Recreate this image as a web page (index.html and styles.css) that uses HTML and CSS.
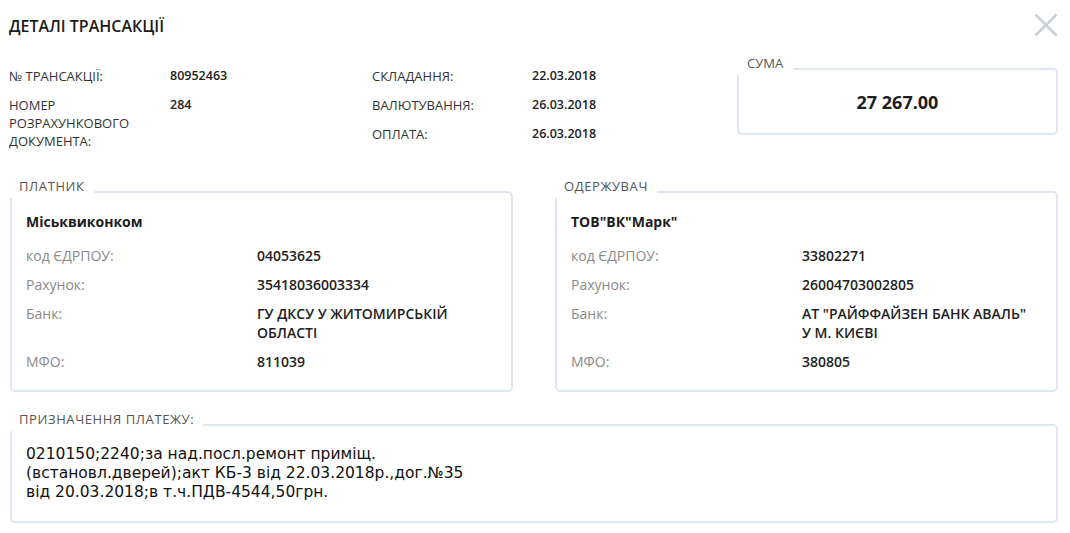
FILE: index.html
```html
<!DOCTYPE html>
<html lang="uk">
<head>
<meta charset="utf-8">
<title>Деталі трансакції</title>
<link rel="stylesheet" href="styles.css">
</head>
<body>
<div class="modal">
  <div class="header">
    <h1 class="title">ДЕТАЛІ ТРАНСАКЦІЇ</h1>
    <button class="close" aria-label="Закрити">
      <svg width="24" height="24" viewBox="0 0 24 24"><path d="M1.5 1.5 L22.5 22.5 M22.5 1.5 L1.5 22.5" stroke="#cbd0d8" stroke-width="2.6" fill="none"/></svg>
    </button>
  </div>

  <div class="info">
    <div class="col">
      <div class="row"><span class="lbl">№ ТРАНСАКЦІЇ:</span><span class="val">80952463</span></div>
      <div class="row"><span class="lbl">НОМЕР РОЗРАХУНКОВОГО ДОКУМЕНТА:</span><span class="val">284</span></div>
    </div>
    <div class="col">
      <div class="row"><span class="lbl">СКЛАДАННЯ:</span><span class="val">22.03.2018</span></div>
      <div class="row"><span class="lbl">ВАЛЮТУВАННЯ:</span><span class="val">26.03.2018</span></div>
      <div class="row"><span class="lbl">ОПЛАТА:</span><span class="val">26.03.2018</span></div>
    </div>
    <div class="box sum">
      <span class="legend">СУМА</span>
      <div class="amount">27 267.00</div>
    </div>
  </div>

  <div class="parties">
    <div class="box party">
      <span class="legend">ПЛАТНИК</span>
      <div class="name">Міськвиконком</div>
      <div class="prow"><span class="plbl">код ЄДРПОУ:</span><span class="pval">04053625</span></div>
      <div class="prow"><span class="plbl">Рахунок:</span><span class="pval">35418036003334</span></div>
      <div class="prow"><span class="plbl">Банк:</span><span class="pval">ГУ ДКСУ У ЖИТОМИРСЬКІЙ ОБЛАСТІ</span></div>
      <div class="prow"><span class="plbl">МФО:</span><span class="pval">811039</span></div>
    </div>
    <div class="box party">
      <span class="legend">ОДЕРЖУВАЧ</span>
      <div class="name">ТОВ"ВК"Марк"</div>
      <div class="prow"><span class="plbl">код ЄДРПОУ:</span><span class="pval">33802271</span></div>
      <div class="prow"><span class="plbl">Рахунок:</span><span class="pval">26004703002805</span></div>
      <div class="prow"><span class="plbl">Банк:</span><span class="pval">АТ "РАЙФФАЙЗЕН БАНК АВАЛЬ"<br>У М. КИЄВІ</span></div>
      <div class="prow"><span class="plbl">МФО:</span><span class="pval">380805</span></div>
    </div>
  </div>

  <div class="box purpose">
    <span class="legend">ПРИЗНАЧЕННЯ ПЛАТЕЖУ:</span>
    <div class="ptext">0210150;2240;за над.посл.ремонт приміщ.<br>(встановл.дверей);акт КБ-3 від 22.03.2018р.,дог.№35<br>від 20.03.2018;в т.ч.ПДВ-4544,50грн.</div>
  </div>
</div>
</body>
</html>
```
FILE: styles.css
```css
* { box-sizing: border-box; }
html, body { margin: 0; padding: 0; background: #fff; }
body { font-family: "Open Sans", "Liberation Sans", sans-serif; color: #222; }

.modal { width: 1070px; padding: 0 12px 10px 10px; }

.header { display: flex; justify-content: space-between; align-items: flex-start; padding-top: 14px; }
.title { margin: 0 0 0 -1px; font-size: 16px; line-height: 24px; font-weight: 600; color: #1b1b1b; }
.close { border: 0; background: none; padding: 0; margin-top: -1px; width: 24px; height: 24px; cursor: pointer; }
.close svg { display: block; }

.info { display: grid; grid-template-columns: 363px 365px 1fr; margin: 29px 0 0 -1px; align-items: start; }
.col { display: flex; flex-direction: column; gap: 11px; }
.row { display: flex; font-size: 13px; line-height: 18px; }
.lbl { width: 161px; flex: none; color: #333; padding-right: 26px; }
.col + .col .lbl { width: 160px; }
.val { font-size: 12.5px; font-weight: 600; color: #222; }

.box { position: relative; border: 2px solid #dfe6f1; border-radius: 5px; background: #fff; }
.legend { position: absolute; top: -16px; left: -2px; padding: 0 9px 3px 9px; background: #fff; font-size: 13px; line-height: 18px; letter-spacing: 0.6px; color: #555; white-space: nowrap; }

.sum { margin-top: 1px; height: 67px; display: flex; align-items: center; justify-content: center; }
.sum .legend { padding-left: 10px; padding-right: 10px; letter-spacing: 0; }
.amount { font-size: 18px; font-weight: 700; color: #1e1e1e; }

.parties { display: grid; grid-template-columns: 1fr 1fr; gap: 42px; margin-top: 41px; }
.party { padding: 19px 14px 19px 14px; }
.name { font-size: 14px; line-height: 19px; font-weight: 700; color: #1c1c1c; margin-bottom: 15px; }
.prow { display: flex; font-size: 14px; line-height: 19px; margin-bottom: 10px; }
.prow:last-child { margin-bottom: 0; }
.plbl { width: 231px; flex: none; color: #8a8a8a; }
.pval { font-weight: 600; color: #222; }

.purpose { margin-top: 32px; padding: 19px 14px 19px 14px; }
.ptext { font-family: "DejaVu Sans", sans-serif; font-size: 15.5px; line-height: 19px; color: #111; }
```
